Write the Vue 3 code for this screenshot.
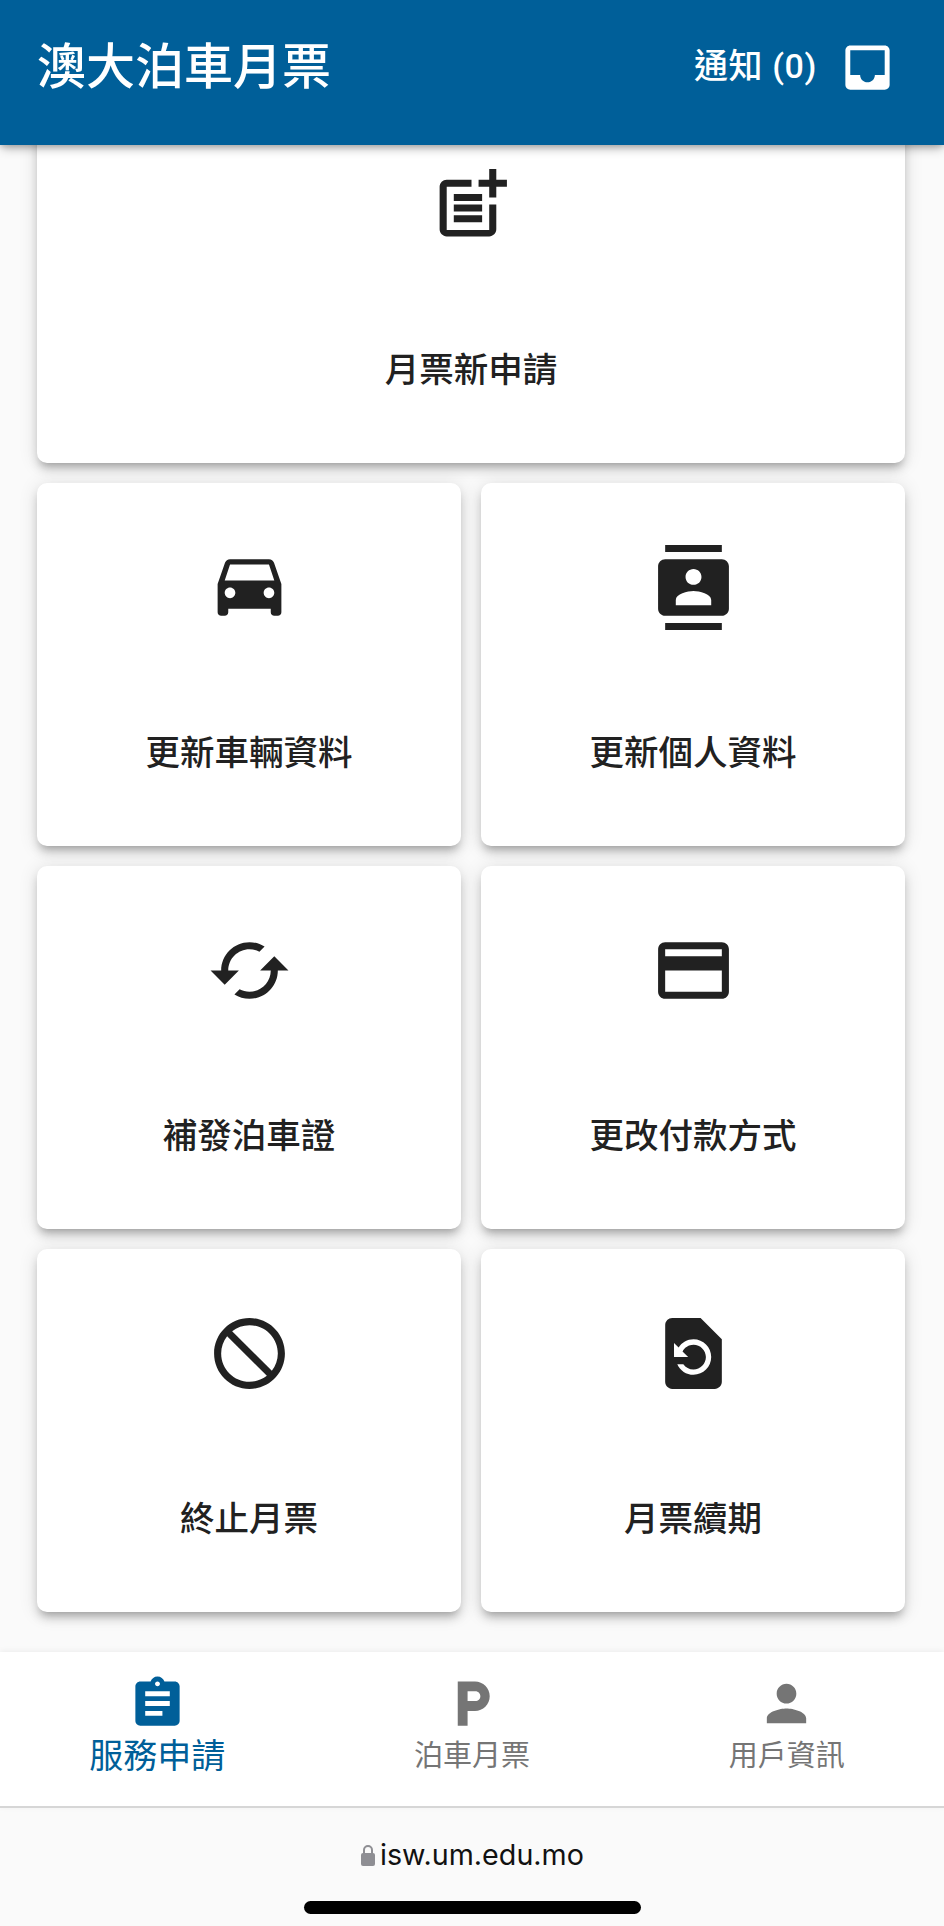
<template>
  <div class="app">
    <header class="app-bar">
      <h1 class="app-bar__title">澳大泊車月票</h1>
      <div class="app-bar__notice">
        <span class="app-bar__count">通知 (0)</span>
        <svg class="app-bar__icon" viewBox="0 0 24 24" fill="currentColor" aria-hidden="true">
          <path d="M19 3H4.99c-1.11 0-1.98.89-1.98 2L3 19c0 1.1.88 2 1.99 2H19c1.1 0 2-.9 2-2V5c0-1.11-.9-2-2-2zm0 12h-4c0 1.66-1.35 3-3 3s-3-1.34-3-3H4.99V5H19v10z" />
        </svg>
      </div>
    </header>

    <main class="content">
      <div class="grid">
        <button
          v-for="item in services"
          :key="item.label"
          type="button"
          class="card"
          :class="{ 'card--wide': item.wide }"
        >
          <svg class="card__icon" viewBox="0 0 24 24" fill="currentColor" aria-hidden="true">
            <path :d="item.icon" />
          </svg>
          <span class="card__label">{{ item.label }}</span>
        </button>
      </div>
    </main>

    <nav class="tabs">
      <div
        v-for="tab in tabs"
        :key="tab.label"
        class="tab"
        :class="{ 'tab--active': tab.active }"
      >
        <svg class="tab__icon" viewBox="0 0 24 24" fill="currentColor" aria-hidden="true">
          <path :d="tab.icon" />
        </svg>
        <span class="tab__label">{{ tab.label }}</span>
      </div>
    </nav>

    <footer class="browser-bar">
      <div class="browser-bar__url">
        <svg class="browser-bar__lock" viewBox="0 0 16 24" aria-hidden="true">
          <path d="M4 11V7a4 4 0 0 1 8 0v4" fill="none" stroke="#8e8e93" stroke-width="2" />
          <rect x="1" y="10" width="14" height="13" rx="2" fill="#8e8e93" />
        </svg>
        <span>isw.um.edu.mo</span>
      </div>
      <div class="browser-bar__home"></div>
    </footer>
  </div>
</template>

<script setup>
const services = [
  {
    label: '月票新申請',
    wide: true,
    icon: 'M17 19.22H5V7h7V5H5c-1.1 0-2 .9-2 2v12c0 1.1.9 2 2 2h12c1.1 0 2-.9 2-2v-7h-2v7.22zM19 2h-2v3h-3c.01.01 0 2 0 2h3v2.99c.01.01 2 0 2 0V7h3V5h-3V2zM7 9h8v2H7zM7 12v2h8v-2h-3zM7 15h8v2H7z'
  },
  {
    label: '更新車輛資料',
    icon: 'M18.92 5.01C18.72 4.42 18.16 4 17.5 4h-11c-.66 0-1.21.42-1.42 1.01L3 11v8c0 .55.45 1 1 1h1c.55 0 1-.45 1-1v-1h12v1c0 .55.45 1 1 1h1c.55 0 1-.45 1-1v-8l-2.08-5.99zM6.5 15c-.83 0-1.5-.67-1.5-1.5S5.67 12 6.5 12s1.5.67 1.5 1.5S7.33 15 6.5 15zm11 0c-.83 0-1.5-.67-1.5-1.5s.67-1.5 1.5-1.5 1.5.67 1.5 1.5-.67 1.5-1.5 1.5zM5 10l1.5-4.5h11L19 10H5z'
  },
  {
    label: '更新個人資料',
    icon: 'M20 0H4v2h16V0zM4 24h16v-2H4v2zM20 4H4c-1.1 0-2 .9-2 2v12c0 1.1.9 2 2 2h16c1.1 0 2-.9 2-2V6c0-1.1-.9-2-2-2zm-8 2.75c1.24 0 2.25 1.01 2.25 2.25s-1.01 2.25-2.25 2.25S9.75 10.24 9.75 9 10.76 6.75 12 6.75zM17 17H7v-1.5c0-1.67 3.33-2.5 5-2.5s5 .83 5 2.5V17z'
  },
  {
    label: '補發泊車證',
    icon: 'M19 8l-4 4h3c0 3.31-2.69 6-6 6-1.01 0-1.97-.25-2.8-.7l-1.46 1.46C8.97 19.54 10.43 20 12 20c4.42 0 8-3.58 8-8h3l-4-4zM6 12c0-3.31 2.69-6 6-6 1.01 0 1.97.25 2.8.7l1.46-1.46C15.03 4.46 13.57 4 12 4c-4.42 0-8 3.58-8 8H1l4 4 4-4H6z'
  },
  {
    label: '更改付款方式',
    icon: 'M20 4H4c-1.11 0-1.99.89-1.99 2L2 18c0 1.11.89 2 2 2h16c1.11 0 2-.89 2-2V6c0-1.11-.89-2-2-2zm0 14H4v-6h16v6zm0-10H4V6h16v2z'
  },
  {
    label: '終止月票',
    icon: 'M12 2C6.48 2 2 6.48 2 12s4.48 10 10 10 10-4.48 10-10S17.52 2 12 2zm0 18c-4.42 0-8-3.58-8-8 0-1.85.63-3.55 1.69-4.9L16.9 18.31C15.55 19.37 13.85 20 12 20zm6.31-3.1L7.1 5.69C8.45 4.63 10.15 4 12 4c4.42 0 8 3.58 8 8 0 1.85-.63 3.55-1.69 4.9z'
  },
  {
    label: '月票續期',
    icon: 'M14 2H6c-1.1 0-1.99.9-1.99 2L4 20c0 1.1.89 2 1.99 2H18c1.1 0 2-.9 2-2V8l-6-6zm-2 16c-2.05 0-3.81-1.24-4.58-3h1.71c.63.9 1.68 1.5 2.87 1.5 1.93 0 3.5-1.57 3.5-3.5S13.93 9.5 12 9.5c-1.35 0-2.52.78-3.1 1.9l1.6 1.6h-4V9l1.3 1.3C8.69 8.92 10.23 8 12 8c2.76 0 5 2.24 5 5s-2.24 5-5 5z'
  }
]

const tabs = [
  {
    label: '服務申請',
    active: true,
    icon: 'M19 3h-4.18C14.4 1.84 13.3 1 12 1c-1.3 0-2.4.84-2.82 2H5c-1.1 0-2 .9-2 2v14c0 1.1.9 2 2 2h14c1.1 0 2-.9 2-2V5c0-1.1-.9-2-2-2zm-7 0c.55 0 1 .45 1 1s-.45 1-1 1-1-.45-1-1 .45-1 1-1zm2 14H7v-2h7v2zm3-4H7v-2h10v2zm0-4H7V7h10v2z'
  },
  {
    label: '泊車月票',
    icon: 'M13 3H6v18h4v-6h3c3.31 0 6-2.69 6-6s-2.69-6-6-6zm.2 8H10V7h3.2c1.1 0 2 .9 2 2s-.9 2-2 2z'
  },
  {
    label: '用戶資訊',
    icon: 'M12 12c2.21 0 4-1.79 4-4s-1.79-4-4-4-4 1.79-4 4 1.79 4 4 4zm0 2c-2.67 0-8 1.34-8 4v2h16v-2c0-2.66-5.33-4-8-4z'
  }
]
</script>

<style scoped>
.app {
  display: flex;
  flex-direction: column;
  height: 1926px;
  overflow: hidden;
  background: #fafafa;
  font-family: Roboto, "Noto Sans CJK TC", sans-serif;
}

.app-bar {
  position: relative;
  z-index: 2;
  flex: none;
  display: flex;
  align-items: center;
  justify-content: space-between;
  box-sizing: border-box;
  height: 145px;
  padding: 0 54px 11px 37px;
  color: #fff;
  background: #005f99;
  box-shadow: 0 5px 10px -2px rgba(0, 0, 0, 0.3), 0 2px 5px rgba(0, 0, 0, 0.14);
}

.app-bar__title {
  margin: 2px 0 0;
  font-size: 49px;
  font-weight: 500;
  line-height: 1.2;
}

.app-bar__notice {
  display: flex;
  align-items: center;
  gap: 21px;
  font-size: 34px;
  font-weight: 500;
  letter-spacing: 0.6px;
}

.app-bar__count {
  margin-bottom: 8px;
}

.app-bar__icon {
  width: 59px;
  height: 59px;
  margin-right: -7px;
}

.content {
  flex: 1;
  min-height: 0;
}

.grid {
  display: grid;
  grid-template-columns: 1fr 1fr;
  gap: 20px;
  margin-top: -45px;
  padding: 0 39px 0 37px;
}

.card {
  display: flex;
  flex-direction: column;
  align-items: center;
  box-sizing: border-box;
  height: 363px;
  padding: 62px 0 0;
  border: none;
  border-radius: 10px;
  color: #212121;
  font-family: inherit;
  background: #fff;
  box-shadow: 0 7px 7px -5px rgba(0, 0, 0, 0.2), 0 7px 10px rgba(0, 0, 0, 0.14), 0 2px 19px rgba(0, 0, 0, 0.12);
}

.card--wide {
  grid-column: span 2;
}

.card__icon {
  flex: none;
  width: 85px;
  height: 85px;
}

.card__label {
  margin-top: 99px;
  font-size: 34.5px;
  font-weight: 500;
  line-height: 48px;
}

.tabs {
  position: relative;
  z-index: 1;
  flex: none;
  display: flex;
  box-sizing: border-box;
  height: 156px;
  border-bottom: 2px solid #d6d6d6;
  background: #fff;
  box-shadow: 0 -1px 6px rgba(0, 0, 0, 0.06);
}

.tab {
  flex: 1;
  display: flex;
  flex-direction: column;
  align-items: center;
  padding-top: 22px;
  color: #757575;
}

.tab--active {
  color: #005f99;
}

.tab__icon {
  flex: none;
  width: 59px;
  height: 59px;
}

.tab__label {
  margin-top: 1px;
  font-size: 29px;
  line-height: 44px;
}

.tab--active .tab__label {
  font-size: 34px;
}

.browser-bar {
  flex: none;
  display: flex;
  flex-direction: column;
  align-items: center;
  height: 118px;
  background: #fafafa;
}

.browser-bar__url {
  display: flex;
  align-items: center;
  gap: 4px;
  margin-top: 27px;
  color: #111;
  font-family: Inter, "Liberation Sans", sans-serif;
  font-size: 28.7px;
  line-height: 40px;
}

.browser-bar__lock {
  width: 16px;
  height: 24px;
}

.browser-bar__home {
  width: 337px;
  height: 13px;
  margin-top: 26px;
  border-radius: 7px;
  background: #000;
}
</style>

<style>
html,
body {
  background: #fafafa;
}
</style>
